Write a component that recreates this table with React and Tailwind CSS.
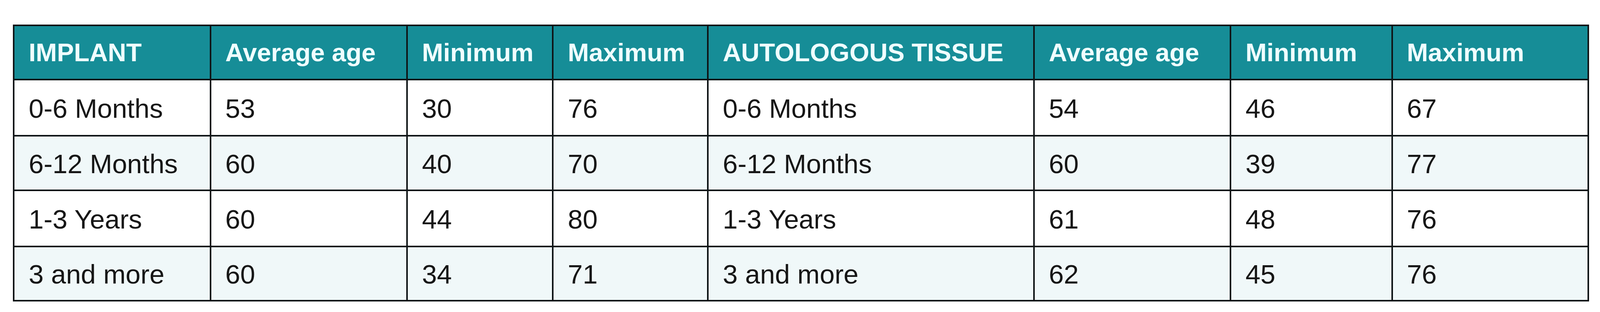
import React from "react";

const headers = [
  "IMPLANT",
  "Average age",
  "Minimum",
  "Maximum",
  "AUTOLOGOUS TISSUE",
  "Average age",
  "Minimum",
  "Maximum",
];

const rows = [
  ["0-6 Months", "53", "30", "76", "0-6 Months", "54", "46", "67"],
  ["6-12 Months", "60", "40", "70", "6-12 Months", "60", "39", "77"],
  ["1-3 Years", "60", "44", "80", "1-3 Years", "61", "48", "76"],
  ["3 and more", "60", "34", "71", "3 and more", "62", "45", "76"],
];

export default function App() {
  return (
    <div className="w-full h-[800px] bg-white pt-[63px] pl-[0.816%] pr-[0.684%]">
      <div
        className="grid w-full grid-cols-[553fr_553fr_409fr_435fr_920fr_553fr_453fr_552fr] grid-rows-[135px_140px_136px_140px_135px] gap-[4px] p-[4px] bg-[#0f1416]"
        style={{ fontFamily: '"Liberation Sans", Arial, sans-serif' }}
      >
        {headers.map((h, i) => (
          <div
            key={"h" + i}
            className="flex min-w-0 items-center bg-[#168d97] pl-[0.88vw] text-[1.59vw] font-bold text-[#effeff] leading-none whitespace-nowrap"
          >
            {h}
          </div>
        ))}
        {rows.map((r, ri) =>
          r.map((c, ci) => (
            <div
              key={ri + "-" + ci}
              className={
                "flex min-w-0 items-center pl-[0.88vw] pt-[6px] text-[1.677vw] font-normal text-[#161616] leading-none whitespace-nowrap " +
                (ri % 2 === 1 ? "bg-[#f0f8f9]" : "bg-white")
              }
            >
              {c}
            </div>
          ))
        )}
      </div>
    </div>
  );
}
